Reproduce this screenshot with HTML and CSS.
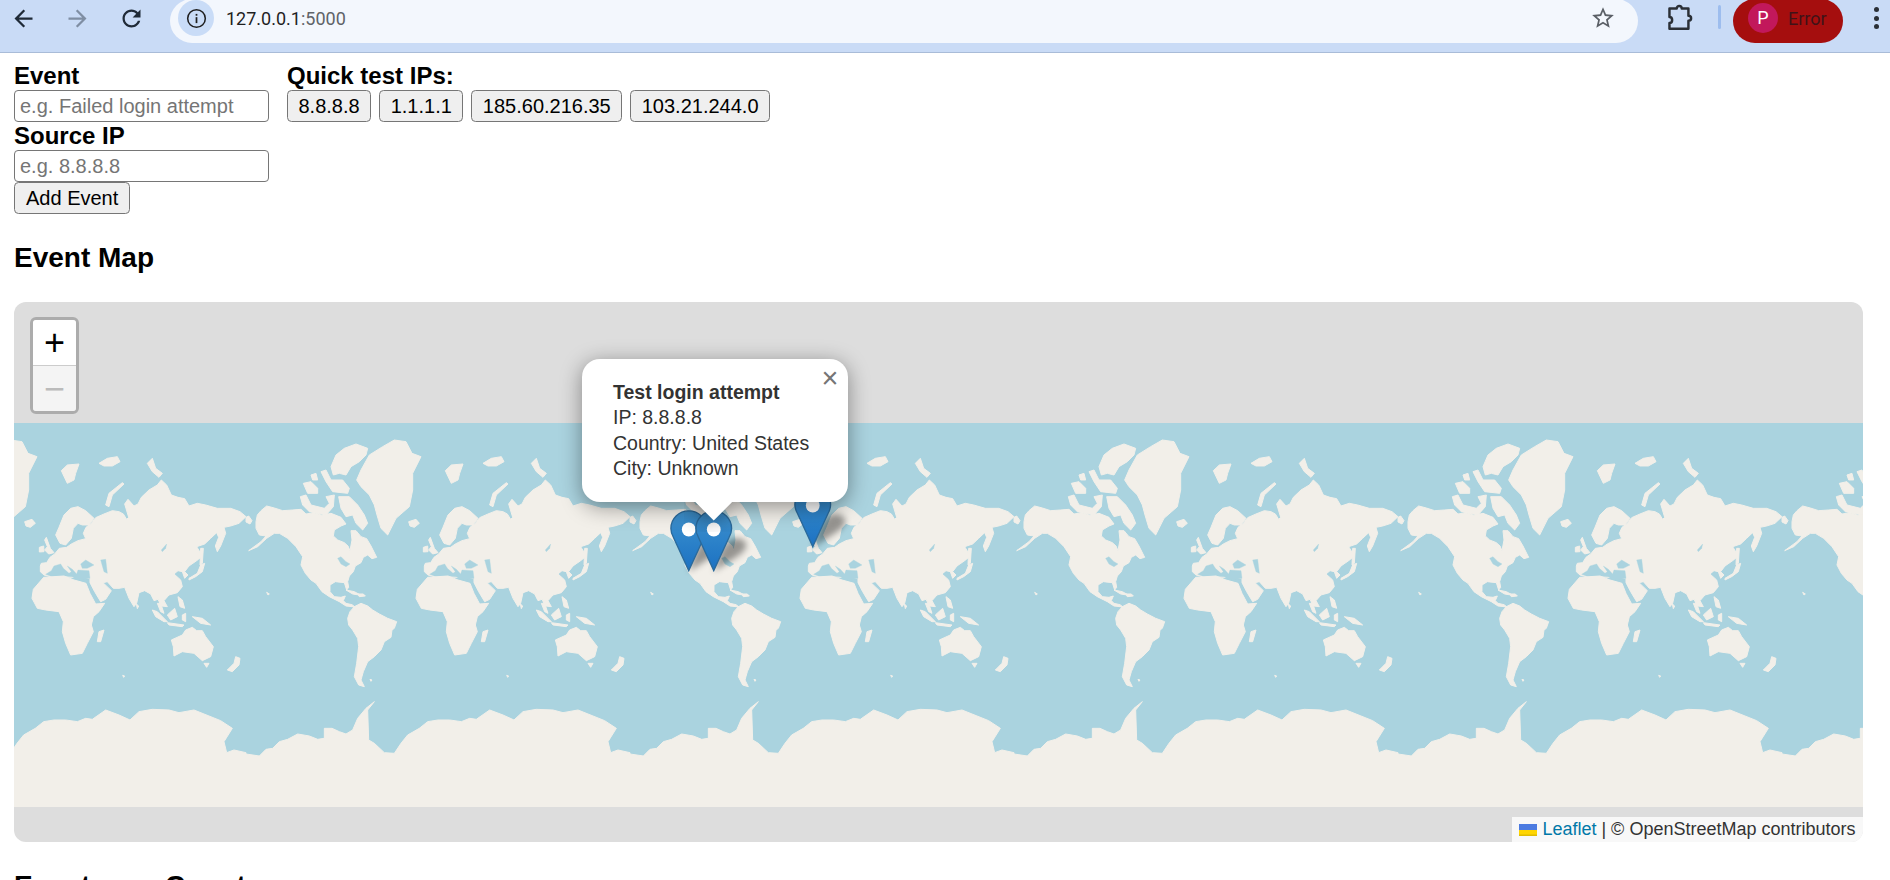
FILE: index.html
```html
<!DOCTYPE html>
<html lang="en">
<head>
<meta charset="utf-8">
<title>Event Map</title>
<link rel="stylesheet" href="styles.css">
</head>
<body>
<header class="toolbar">
  <button class="nav"><svg viewBox="0 0 24 24" class="ico"><path d="M20 11H7.83l5.59-5.59L12 4l-8 8 8 8 1.41-1.41L7.83 13H20v-2z"/></svg></button>
  <button class="nav nav-off"><svg viewBox="0 0 24 24" class="ico"><path d="M4 11h12.17l-5.59-5.59L12 4l8 8-8 8-1.41-1.41L16.17 13H4v-2z"/></svg></button>
  <button class="nav"><svg viewBox="0 0 24 24" class="ico"><path d="M17.65 6.35C16.2 4.9 14.21 4 12 4c-4.42 0-7.99 3.58-7.99 8s3.57 8 7.99 8c3.73 0 6.84-2.55 7.73-6h-2.08c-.82 2.33-3.04 4-5.65 4-3.31 0-6-2.69-6-6s2.69-6 6-6c1.66 0 3.14.69 4.22 1.78L13 11h7V4l-2.35 2.35z"/></svg></button>
  <div class="omnibox">
    <span class="chip"><svg viewBox="0 0 24 24" class="info"><circle cx="12" cy="12" r="9.2"/><rect x="11.1" y="10.6" width="1.8" height="6.2"/><rect x="11.1" y="7.2" width="1.8" height="1.9"/></svg></span>
    <span class="url">127.0.0.1<span class="port">:5000</span></span>
    <svg viewBox="0 0 24 24" class="star"><path d="M22 9.24l-7.19-.62L12 2 9.19 8.63 2 9.24l5.46 4.73L5.82 21 12 17.27 18.18 21l-1.63-7.03L22 9.24zM12 15.4l-3.76 2.27 1-4.28-3.32-2.88 4.38-.38L12 6.1l1.71 4.04 4.38.38-3.32 2.88 1 4.28L12 15.4z"/></svg>
  </div>
  <svg viewBox="0 0 26 26" class="puzzle"><path d="M4 5h6.5c0-3.2 4.5-3.2 4.5 0H21v6.5c3.2 0 3.2 4.5 0 4.5V23H4v-5c3.2 0 3.2-5.5 0-5.5Z"/></svg>
  <span class="divider"></span>
  <div class="profile"><span class="avatar">P</span><span class="err">Error</span></div>
  <div class="kebab"><i></i><i></i><i></i></div>
</header>

<main class="page">
  <section class="forms">
    <form class="event-form">
      <label class="lbl">Event</label>
      <input class="field" placeholder="e.g. Failed login attempt">
      <label class="lbl">Source IP</label>
      <input class="field" placeholder="e.g. 8.8.8.8">
      <div><button type="button" class="btn btn-add">Add Event</button></div>
    </form>
    <div class="quick">
      <div class="lbl">Quick test IPs:</div>
      <div class="quick-row">
        <button type="button" class="btn">8.8.8.8</button>
        <button type="button" class="btn">1.1.1.1</button>
        <button type="button" class="btn">185.60.216.35</button>
        <button type="button" class="btn">103.21.244.0</button>
      </div>
    </div>
  </section>

  <h3 class="heading">Event Map</h3>

  <div class="map">
    <svg class="world" width="1849" height="384" viewBox="0 0 1849 384">
      <defs>
        <g id="tile" transform="translate(0 17) scale(.33333)">
          <!-- North America -->
          <path d="M30 245 34 225 45 212 62 198 85 204 110 212 140 210 165 208 180 222 205 218 228 226 255 220 285 232 300 252 285 258 265 270 262 288 275 300 295 308 306 318 312 332 318 300 315 272 330 272 345 290 362 296 375 318 386 340 392 352 378 356 365 345 352 352 345 368 328 378 322 395 310 408 305 425 308 442 302 450 295 428 268 425 252 435 252 455 265 470 285 472 298 468 292 482 300 490 318 494 330 503 318 500 300 498 280 485 250 470 228 455 210 430 195 420 178 400 165 375 170 350 150 320 125 295 100 280 85 280 62 295 35 320 8 332 45 305 60 288 40 285 30 265Z"/>
          <path d="M255 80 270 45 295 25 330 12 365 25 360 45 340 65 315 80 300 105 280 100 262 105Z"/>
          <path d="M225 95 240 90 255 120 290 120 310 145 305 160 260 155 240 125Z"/>
          <path d="M172 130 195 125 215 145 215 160 185 160Z"/>
          <path d="M195 105 210 100 215 120 200 120Z"/>
          <path d="M163 170 180 165 195 195 235 205 250 190 240 170 265 165 262 200 240 225 190 215 170 195Z"/>
          <path d="M278 170 310 170 335 195 355 225 365 250 350 270 330 250 320 225 300 230 285 205Z"/>
          <path d="M332 120 345 90 370 45 410 20 445 0 480 5 498 40 525 50 500 100 500 150 490 200 450 235 425 285 405 265 393 225 385 195 370 165 345 140Z"/>
          <path d="M488 245 510 238 520 250 505 262 492 258Z"/>
          <path d="M532 322 545 318 546 335 532 336Z"/>
          <path d="M548 300 553 292 565 325 576 338 560 342 548 330 556 320Z"/>
          <path d="M0 232 8 228 18 242 12 252 0 246Z"/>
          <path d="M300 450 325 455 345 466 320 462Z"/>
          <path d="M335 462 352 462 358 468 340 470Z"/>
          <path d="M62 457 70 462 66 465Z"/>
          <path class="sea" d="M275 355 285 350 300 365 312 372 300 380 285 372Z"/>
          <!-- South America -->
          <path d="M305 535 312 515 325 500 345 490 365 498 380 510 400 522 425 535 452 545 445 565 438 570 435 592 415 605 405 630 385 650 365 665 352 695 345 720 355 740 338 735 325 710 332 670 338 620 335 595 320 570 308 555Z"/>
          <path d="M372 718 378 720 375 724Z"/>
          <!-- Antarctica -->
          <path d="M0 942 40 948 60 928 80 925 100 905 125 898 155 882 190 888 215 898 235 895 235 865 258 865 280 875 300 882 320 870 335 835 360 805 385 785 365 810 368 900 385 910 415 938 445 940 465 910 485 885 520 865 545 845 576 840 611 840 646 845 671 835 691 838 731 810 771 825 804 840 831 815 871 808 921 810 951 818 996 810 1041 828 1076 842 1111 865 1086 905 1094 938 1116 930 1152 938V1105H0Z"/>
          <g transform="translate(576 0)">
            <!-- Eurasia -->
            <path d="M-41 378-38 370-22 368-12 352 2 342 16 325 38 322 52 312 72 302 95 296 88 280 96 262 112 250 125 233 150 222 175 212 195 215 208 222 218 238 224 232 212 192 222 178 240 198 252 192 262 172 285 150 310 135 322 120 338 135 352 165 372 172 392 176 405 198 430 190 455 195 490 205 530 205 558 215 576 230 555 250 530 258 510 262 515 280 500 318 490 335 484 318 494 292 488 278 470 295 452 312 428 320 445 348 428 362 405 378 392 395 402 405 392 415 385 395 372 392 360 402 380 420 385 440 370 458 345 465 330 482 340 500 322 498 312 478 300 482 290 462 272 452 255 458 248 490 240 500 225 475 212 442 195 445 178 445 160 425 147 428 172 452 155 478 140 485 122 455 108 428 108 415 60 412-10 410-30 405-41 395Z"/>
            <path d="M5 285 15 262 30 225 50 205 72 200 95 212 120 235 105 255 85 255 72 250 58 265 52 295 35 315 18 310Z"/>
            <path class="sea" d="M-25 403-8 392 0 378 20 372 28 385 45 400 52 395 40 378 55 388 68 402 72 390 105 392 108 415 90 418 70 420 55 410 25 408-5 410Z"/>
            <path class="sea" d="M80 372 95 360 120 375 100 385 85 385Z"/>
            <path class="sea" d="M140 360 155 358 160 400 150 395Z"/>
            <path class="sea" d="M322 330 338 312 335 325 325 335Z"/>
            <!-- Africa -->
            <path d="M-66 475-62 448-31 412 0 410 30 408 60 420 96 430 108 460 125 492 152 490 135 515 118 530 112 555 118 575 100 610 85 640 50 645 35 610 25 575 28 545 15 515-25 510-50 505Z"/>
            <path d="M130 605 135 575 150 570 140 605Z"/>
            <!-- Arctic islands -->
            <path d="M155 195 165 160 205 128 210 132 175 165 165 200Z"/>
            <path d="M22 92 40 75 75 72 65 100 60 120 40 130 28 105Z"/>
            <path d="M135 70 160 55 190 50 198 65 175 78 150 78Z"/>
            <path d="M280 70 295 55 305 85 325 100 315 112 295 95Z"/>
            <!-- East Asia and Oceania -->
            <path d="M440 325 448 325 445 370 438 375Z"/>
            <path d="M405 415 430 400 440 375 452 370 445 395 425 410 405 420Z"/>
            <path d="M295 510 310 515 340 545 330 545 305 530Z"/>
            <path d="M340 525 362 505 370 530 350 540Z"/>
            <path d="M340 548 390 555 385 560 345 555Z"/>
            <path d="M372 470 385 480 392 505 378 500Z"/>
            <path d="M385 525 395 520 395 545 385 540Z"/>
            <path d="M415 530 445 535 470 555 440 550Z"/>
            <path d="M310 490 320 490 330 520 320 515Z"/>
            <path d="M247 492 254 498 250 506Z"/>
            <path d="M352 600 385 585 395 570 415 562 428 572 445 572 455 590 478 620 470 650 445 662 420 640 385 635 360 648 358 620Z"/>
            <path d="M450 670 465 670 458 682Z"/>
            <path d="M520 690 540 670 545 650 558 655 555 675 535 695Z"/>
            <path d="M206 706 212 708 209 712Z"/>
          </g>
        </g>
      </defs>
      <rect class="water" width="1849" height="384"/>
      <g class="land">
        <use href="#tile" x="-152"/>
        <use href="#tile" x="232"/>
        <use href="#tile" x="616"/>
        <use href="#tile" x="1000"/>
        <use href="#tile" x="1384"/>
        <use href="#tile" x="1768"/>
      </g>
    </svg>

    <svg class="pin pin-a" viewBox="0 0 25 41"><use href="#pin-shape"/></svg>
    <svg class="pin pin-c" viewBox="0 0 25 41"><use href="#pin-shape"/></svg>
    <svg class="pin pin-b" viewBox="0 0 25 41">
      <defs>
        <linearGradient id="pin-fill" x1="0" y1="0" x2="0" y2="1">
          <stop offset="0" stop-color="#3f8fc9"/><stop offset=".5" stop-color="#2c82c9"/><stop offset="1" stop-color="#1c71c2"/>
        </linearGradient>
        <g id="pin-shape">
          <path class="pin-shadow" d="M12.500 41 28 31C36 26 36 20 29 19 24 18 20 22 17 28Z"/>
          <path class="pin-body" d="M12.5.6C5.9.6.6 5.8.6 12.3c0 2.300.7 4.300 1.800 6.200L12.500 40.400 22.600 18.500c1.100-1.900 1.800-3.900 1.800-6.200C24.400 5.800 19.100.6 12.500.6Z"/>
          <circle class="pin-dot" cx="12.500" cy="13" r="4.600"/>
        </g>
      </defs>
      <use href="#pin-shape"/>
    </svg>

    <div class="zoom">
      <div class="zoom-btn">+</div>
      <div class="zoom-btn zoom-off">−</div>
    </div>

    <div class="popup">
      <span class="close">×</span>
      <b>Test login attempt</b><br>IP: 8.8.8.8<br>Country: United States<br>City: Unknown
      <div class="tip-wrap"><div class="tip"></div></div>
    </div>

    <div class="attr">
      <svg class="flag" viewBox="0 0 12 8"><rect width="12" height="4" fill="#4c7be1"/><rect y="4" width="12" height="4" fill="#ffd500"/><rect y="7" width="12" height="1" fill="#e0bc00"/></svg>
      <a class="attr-link">Leaflet</a> <span>| © OpenStreetMap contributors</span>
    </div>
  </div>

  <h3 class="heading">Events per Country</h3>
</main>
</body>
</html>
```
FILE: styles.css
```css
* { box-sizing: border-box; }
html, body { margin: 0; height: 880px; overflow: hidden; background: #fff; }
body { font-family: "Liberation Sans", Arial, sans-serif; color: #000; }

/* browser chrome */
.toolbar {
  display: flex;
  align-items: flex-start;
  height: 53px;
  background: #c9dbf6;
  border-bottom: 1px solid #a9bcd8;
}
.nav {
  width: 46px;
  height: 36px;
  margin-right: 8px;
  padding: 0;
  border: 0;
  background: none;
  display: flex;
  align-items: center;
  justify-content: center;
  fill: #1f2a37;
}
.nav-off { fill: #7f8ea3; }
.ico { width: 27px; height: 27px; }
.omnibox {
  flex: 1;
  display: flex;
  align-items: center;
  height: 44px;
  margin: -1px 0 0 8px;
  padding: 0 22px 6px 8px;
  background: #f3f7fd;
  border-radius: 22px;
}
.chip {
  width: 36px;
  height: 36px;
  border-radius: 50%;
  background: #c9dcf7;
  display: flex;
  align-items: center;
  justify-content: center;
}
.info { width: 23px; height: 23px; fill: #1f1f1f; }
.info circle { fill: none; stroke: #1f1f1f; stroke-width: 1.6; }
.url { flex: 1; margin-left: 12px; font: 18px Roboto, sans-serif; color: #1f1f1f; }
.port { color: #5f6368; }
.star { width: 26px; height: 26px; fill: #5a5f66; }
.puzzle {
  width: 29px;
  height: 29px;
  margin: 3px 0 0 27px;
  fill: none;
  stroke: #2a2f36;
  stroke-width: 2.2;
  stroke-linejoin: round;
}
.divider {
  width: 3px;
  height: 24px;
  margin: 5px 12px 0 24px;
  border-radius: 2px;
  background: #9dbdee;
}
.profile {
  display: flex;
  align-items: center;
  width: 110px;
  height: 44px;
  margin-top: -1px;
  padding: 0 0 6px 15px;
  border-radius: 22px;
  background: #a50e0e;
}
.avatar {
  width: 30px;
  height: 30px;
  border-radius: 50%;
  background: #c2185b;
  color: #fff;
  font: 18px/30px Roboto, sans-serif;
  text-align: center;
}
.err { margin-left: 10px; font: 18px Roboto, sans-serif; color: #3f1318; }
.kebab {
  display: flex;
  flex-direction: column;
  gap: 3.500px;
  margin: 7px 11px 0 31px;
}
.kebab i { width: 5px; height: 5px; border-radius: 50%; background: #2a2f36; }

/* page */
.page { padding: 9px 27px 0 14px; }
.forms { display: flex; gap: 18px; }
.event-form { width: 255px; }
.lbl { display: block; font-size: 24px; font-weight: 700; line-height: 28px; }
.field {
  display: block;
  width: 255px;
  height: 32px;
  padding: 0 5px;
  border: 1.500px solid #767676;
  border-radius: 4px;
  background: #fff;
  font: 20px "Liberation Sans", Arial, sans-serif;
}
.field::placeholder { color: #757575; opacity: 1; }
.btn {
  display: block;
  height: 32px;
  padding: 0 10.500px;
  border: 1.500px solid #767676;
  border-radius: 4.500px;
  background: #efefef;
  color: #000;
  font: 20px "Liberation Sans", Arial, sans-serif;
}
.btn-add { padding: 0 11px; }
.quick-row { display: flex; gap: 8px; }
.heading { margin: 28px 0; font-size: 28px; line-height: 32px; font-weight: 700; }

/* map */
.map {
  position: relative;
  height: 540px;
  overflow: hidden;
  border-radius: 12px;
  background: #ddd;
  font-size: 18px;
}
.world { position: absolute; left: 0; top: 121px; display: block; }
.water { fill: #aad3df; }
.land { fill: #f2efe9; stroke: #f2efe9; stroke-width: 3; stroke-linejoin: round; filter: blur(.6px); }
.sea { fill: #aad3df; stroke: #aad3df; stroke-width: 1; }
.pin { position: absolute; width: 37.500px; height: 61.500px; overflow: visible; }
.pin-a { left: 656px; top: 208px; }
.pin-b { left: 681px; top: 208px; }
.pin-c { left: 780px; top: 184px; }
.pin-body { fill: url(#pin-fill); stroke: #2a6a9c; stroke-width: .9; }
.pin-dot { fill: #fff; }
.pin-shadow { fill: rgba(0, 0, 0, .38); filter: blur(2px); }

.zoom {
  position: absolute;
  left: 16px;
  top: 15px;
  width: 49px;
  border: 3px solid rgba(0, 0, 0, .22);
  border-radius: 6px;
  background-clip: padding-box;
}
.zoom-btn {
  height: 45.500px;
  background: #fff;
  color: #000;
  border-radius: 3px 3px 0 0;
  border-bottom: 1.500px solid #ccc;
  font: 400 36px/46px "Liberation Sans", sans-serif;
  text-align: center;
}
.zoom-off {
  height: 45px;
  background: #f4f4f4;
  color: #bbb;
  border-bottom: 0;
  border-radius: 0 0 3px 3px;
}

.popup {
  position: absolute;
  left: 568px;
  top: 57px;
  width: 266px;
  height: 143px;
  padding: 21px 20px 21px 31px;
  border-radius: 18px;
  background: #fff;
  color: #333;
  font-size: 19.500px;
  line-height: 25.350px;
  box-shadow: 0 4.500px 21px rgba(0, 0, 0, .4);
}
.close {
  position: absolute;
  right: 6px;
  top: 7px;
  width: 24px;
  height: 24px;
  font: 29px/24px "Liberation Sans", sans-serif;
  text-align: center;
  color: #757575;
}
.tip-wrap {
  position: absolute;
  left: 102px;
  top: 143px;
  width: 60px;
  height: 30px;
  overflow: hidden;
}
.tip {
  width: 25.500px;
  height: 25.500px;
  margin: -13px auto 0;
  background: #fff;
  transform: rotate(45deg);
  box-shadow: 0 4.500px 21px rgba(0, 0, 0, .4);
}

.attr {
  position: absolute;
  right: 0;
  bottom: 0;
  height: 25px;
  padding: 0 7.500px;
  background: rgba(255, 255, 255, .8);
  color: #333;
  font-size: 18px;
  line-height: 25px;
  white-space: nowrap;
}
.flag { width: 18px; height: 12px; vertical-align: -1px; }
.attr-link { color: #0078a8; }
```
